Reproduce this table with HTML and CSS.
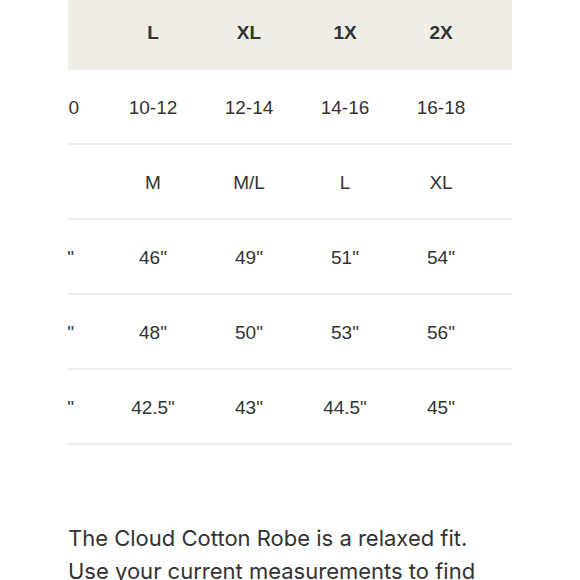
FILE: index.html
```html
<!DOCTYPE html>
<html>
<head>
<meta charset="utf-8">
<link rel="stylesheet" href="styles.css">
</head>
<body>
<div class="page">
  <div class="table-scroll">
    <div class="size-table">
      <div class="row head">
        <div class="cell label">Size</div>
        <div class="cell">M</div>
        <div class="cell">L</div>
        <div class="cell">XL</div>
        <div class="cell">1X</div>
        <div class="cell">2X</div>
        <div class="cell pad"></div>
      </div>
      <div class="row">
        <div class="cell label">US Size</div>
        <div class="cell edge">8-10</div>
        <div class="cell">10-12</div>
        <div class="cell">12-14</div>
        <div class="cell">14-16</div>
        <div class="cell">16-18</div>
        <div class="cell pad"></div>
      </div>
      <div class="row">
        <div class="cell label">Fits</div>
        <div class="cell edge">S</div>
        <div class="cell">M</div>
        <div class="cell">M/L</div>
        <div class="cell">L</div>
        <div class="cell">XL</div>
        <div class="cell pad"></div>
      </div>
      <div class="row">
        <div class="cell label">Bust</div>
        <div class="cell edge">44"</div>
        <div class="cell">46"</div>
        <div class="cell">49"</div>
        <div class="cell">51"</div>
        <div class="cell">54"</div>
        <div class="cell pad"></div>
      </div>
      <div class="row">
        <div class="cell label">Hips</div>
        <div class="cell edge">46"</div>
        <div class="cell">48"</div>
        <div class="cell">50"</div>
        <div class="cell">53"</div>
        <div class="cell">56"</div>
        <div class="cell pad"></div>
      </div>
      <div class="row">
        <div class="cell label">Length</div>
        <div class="cell edge">42"</div>
        <div class="cell">42.5"</div>
        <div class="cell">43"</div>
        <div class="cell">44.5"</div>
        <div class="cell">45"</div>
        <div class="cell pad"></div>
      </div>
    </div>
  </div>
  <p class="note">The Cloud Cotton Robe is a relaxed fit. Use your current measurements to find your best size.</p>
</div>
</body>
</html>
```

FILE: styles.css
```css
html, body {
  margin: 0;
  padding: 0;
  background: #ffffff;
}

.page {
  padding-left: 68px;
  width: 444px;
  font-family: "Liberation Sans", Arial, sans-serif;
  color: #333333;
}

.table-scroll {
  width: 444px;
  overflow: hidden;
}

.size-table {
  margin-left: -219px;
  width: max-content;
}

.row {
  display: grid;
  grid-template-columns: 160px repeat(5, 96px) 23px;
  height: 75px;
  padding-top: 3px;
  box-sizing: border-box;
  border-bottom: 2px solid #efece7;
  align-items: center;
  font-size: 19px;
}

.row.head {
  height: 70px;
  padding-top: 0;
  padding-bottom: 5px;
  border-bottom: none;
  background: #f0ede7;
  font-weight: bold;
}

.cell {
  text-align: center;
}

.cell.edge {
  padding-left: 6px;
}

.cell.label {
  text-align: left;
  padding-left: 16px;
}

.note {
  margin: 77px 0 0 0;
  font-family: "Inter", "Liberation Sans", sans-serif;
  font-size: 22px;
  line-height: 33px;
  color: #333333;
  width: 444px;
}
```
